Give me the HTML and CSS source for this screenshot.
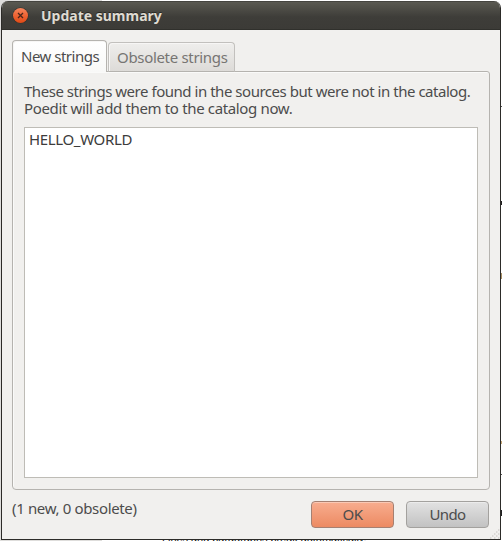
FILE: index.html
```
<!DOCTYPE html>
<html lang="en">
<head>
<meta charset="utf-8">
<title>Update summary</title>
<link rel="stylesheet" href="styles.css">
</head>
<body>
<div class="backdrop">
  <div class="backdrop-text">Lines and paragraphs break automatically.</div>
  <i class="speck s1"></i><i class="speck s2"></i><i class="speck s3"></i><i class="speck s4"></i><i class="speck s5"></i><i class="speck s6"></i>
</div>
<main class="window">
  <header class="titlebar">
    <svg class="close" width="18" height="18" viewBox="0 0 18 18">
      <defs><linearGradient id="g" x1="0" y1="0" x2="0" y2="1"><stop offset="0" stop-color="#f5875f"/><stop offset=".5" stop-color="#ee6434"/><stop offset="1" stop-color="#df4a16"/></linearGradient></defs>
      <circle cx="8.5" cy="8.5" r="8.1" fill="#33322d"/>
      <circle cx="8.5" cy="8.5" r="7.5" fill="url(#g)"/>
      <path d="M6 6l5 5M11 6l-5 5" stroke="#4b261b" stroke-width="1.3"/>
    </svg>
    <h1 class="title">Update summary</h1>
  </header>
  <section class="content">
    <nav class="tabs">
      <div class="tab active"><span class="t-new">New strings</span></div>
      <div class="tab"><span class="t-old">Obsolete strings</span></div>
    </nav>
    <div class="panel">
      <p class="message"><span class="m1">These strings were found in the sources but were not in the catalog.</span><br><span class="m2">Poedit will add them to the catalog now.</span></p>
      <div class="list"><span class="item">HELLO_WORLD</span></div>
    </div>
    <footer class="footer">
      <span class="count">(1 new, 0 obsolete)</span>
      <button class="btn ok"><span>OK</span></button>
      <button class="btn undo"><span>Undo</span></button>
    </footer>
  </section>
  <svg class="grip" width="10" height="10" viewBox="0 0 10 10"><path d="M8 0h2M6 2h2M4 4h2M8 4h2M6 6h2M2 6h2M0 8h2M4 8h2M8 8h2" transform="translate(0 1)" stroke="#d3d1ce" stroke-width="1.4" stroke-dasharray="1.4 .6"/></svg>
</main>
</body>
</html>
```
FILE: styles.css
```
* { box-sizing: border-box; }
body {
  margin: 0;
  width: 502px;
  height: 541px;
  overflow: hidden;
  position: relative;
  background: #e6e4e2;
  font: 15px/17px "Noto Sans", "Open Sans", sans-serif;
  letter-spacing: -.35px;
  color: #4c4c4c;
}
.backdrop {
  position: absolute;
  inset: 0;
  background: linear-gradient(90deg, #dedddb 102px, #fff 102px);
  overflow: hidden;
}
.backdrop-text {
  position: absolute;
  left: 162px;
  top: 531px;
  font: 11px/14px "Liberation Sans", sans-serif;
  letter-spacing: -.05px;
  color: #111;
  white-space: nowrap;
}
.speck { position: absolute; left: 501px; width: 1px; height: 1px; background: #555; }
.s1 { top: 106px; }
.s2 { top: 201px; height: 4px; background: #222; }
.s3 { top: 273px; height: 6px; background: #a99168; }
.s4 { top: 441px; height: 3px; background: #c5a675; }
.s5 { top: 474px; }
.s6 { top: 510px; height: 6px; background: #222; }
.window {
  position: relative;
  display: flex;
  flex-direction: column;
  width: 500px;
  height: 539px;
  margin: 1px 0 0 1px;
  border: 1px solid #2c2b28;
  border-top: 0;
  border-radius: 7px 7px 0 0;
  overflow: hidden;
  background: #f1f0ee;
}
.titlebar {
  display: flex;
  align-items: center;
  flex: 0 0 29px;
  padding-left: 10px;
  background: linear-gradient(#45443f 0 1px, #5a5951 1px, #3e3d39 16px, #3c3b37 28px, #30302c 28px);
}
.title {
  margin: 0 0 0 11px;
  font-size: 14px;
  line-height: 18px;
  letter-spacing: 0;
  color: #dfdbd2;
  text-shadow: 0 -1px #282824;
  white-space: nowrap;
}
.content {
  flex: 1;
  display: flex;
  flex-direction: column;
  padding: 10px 10px 11px;
}
.tabs {
  display: flex;
  align-items: flex-end;
  height: 32px;
  gap: 1px;
  margin-bottom: -1px;
  position: relative;
}
.tab {
  width: 127px;
  height: 30px;
  padding: 7px 0 0 8px;
  border: 1px solid #c2c0bd;
  border-bottom-color: #b5b3af;
  border-radius: 4px 4px 0 0;
  background: linear-gradient(#efeeec, #dddbd8);
  box-shadow: inset 1px 1px #f7f6f5;
  color: #777573;
  white-space: nowrap;
}
.tab:not(.active) { padding-top: 6px; }
.tab.active {
  width: 95px;
  height: 32px;
  border-color: #b5b3af;
  border-bottom: 0;
  background: linear-gradient(#fff, #f8f8f7);
  color: #4c4c4c;
}
.t-new { letter-spacing: -.5px; }
.t-old { letter-spacing: -.32px; }
.panel {
  flex: 0 0 419px;
  display: flex;
  flex-direction: column;
  padding: 11px 11px 11px;
  border: 1px solid #b5b3af;
  border-radius: 0 3px 4px 4px;
  box-shadow: inset 1px 1px #fafaf9;
}
.message { margin: 0 0 10px; height: 34px; white-space: nowrap; }
.m1 { letter-spacing: -.47px; }
.list {
  flex: 1;
  padding: 3px 4px;
  border: 1px solid #bebcb6;
  background: #fff;
  color: #3c3c3c;
}
.footer { display: flex; margin-top: 11px; padding-right: 1px; }
.count { flex: 1; margin-top: -1px; white-space: nowrap; }
.btn {
  width: 83px;
  height: 27px;
  margin-left: 12px;
  padding: 0 0 1px;
  border: 1px solid #a3a19e;
  border-radius: 4px;
  font: inherit;
  letter-spacing: -.6px;
  color: #4c4c4c;
  background: linear-gradient(#e2e2e2, #c2c2c2);
  box-shadow: inset 0 1px rgba(255, 255, 255, .35);
}
.ok { border-color: #a58072; background: linear-gradient(#f8ad8f, #ec8a62); margin-left: 0; }
.grip { position: absolute; right: 0; bottom: 0; }
```
